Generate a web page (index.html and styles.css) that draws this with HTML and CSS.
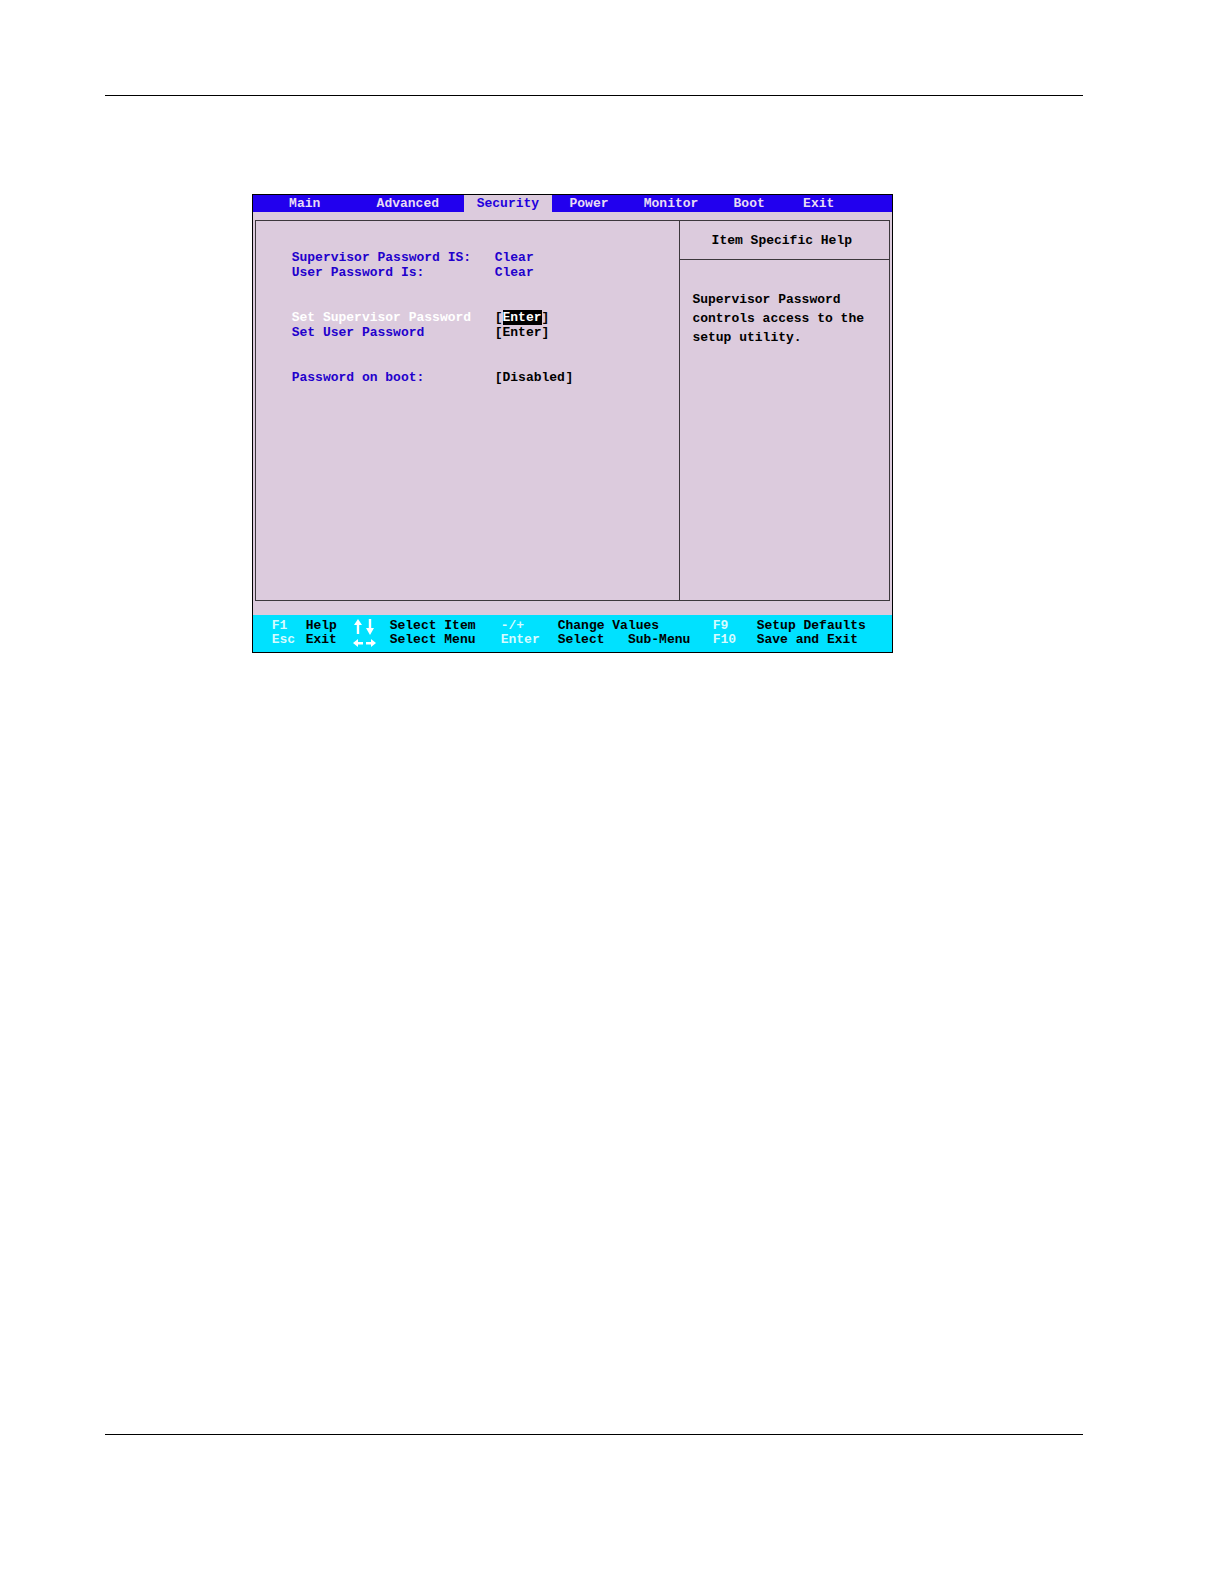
FILE: index.html
```html
<!doctype html>
<html lang="en">

<head>
  <meta charset="utf-8">
  <meta name="viewport" content="width=device-width, initial-scale=1">
  <title>Setup Utility - Security</title>
  <link rel="stylesheet" href="styles.css">
</head>

<body>
  <div class="page">
    <hr class="rule">

    <main class="bios">
      <nav class="tabs">
        <button class="tab">Main</button>
        <button class="tab">Advanced</button>
        <button class="tab active">Security</button>
        <button class="tab">Power</button>
        <button class="tab">Monitor</button>
        <button class="tab">Boot</button>
        <button class="tab">Exit</button>
      </nav>

      <div class="panel">
        <section class="settings">
          <div class="group">
            <div class="row"><span>Supervisor Password IS:</span><span>Clear</span></div>
            <div class="row"><span>User Password Is:</span><span>Clear</span></div>
          </div>
          <div class="group">
            <div class="row">
              <label class="selected" for="set-supervisor">Set Supervisor Password</label>
              <span class="value">[<button class="field highlight" id="set-supervisor">Enter</button>]</span>
            </div>
            <div class="row">
              <label for="set-user">Set User Password</label>
              <span class="value">[<button class="field" id="set-user">Enter</button>]</span>
            </div>
          </div>
          <div class="group">
            <div class="row">
              <label for="boot-password">Password on boot:</label>
              <span class="value">[<select class="field" id="boot-password"><option>Disabled</option><option>Enabled</option></select>]</span>
            </div>
          </div>
        </section>

        <aside class="help">
          <h1 class="help-title">Item Specific Help</h1>
          <p class="help-text">Supervisor Password controls access to the setup utility.</p>
        </aside>
      </div>

      <footer class="keys">
        <kbd>F1</kbd>
        <span>Help</span>
        <svg class="arrows" viewBox="0 0 24 28" aria-hidden="true">
          <!-- up / down -->
          <path d="M5 0l4 6H6.200v9H3.800V6H1zM15.800 0h2.400v9H21l-4 7-4-7h2.800z" />
          <!-- left / right -->
          <path d="M0 24l5-4v3h5v2.400H5V28zM23 24l-5-4v3h-5v2.400h5V28z" />
        </svg>
        <span>Select Item</span>
        <kbd>-/+</kbd>
        <span>Change Values</span>
        <kbd>F9</kbd>
        <span>Setup Defaults</span>

        <kbd>Esc</kbd>
        <span>Exit</span>
        <span>Select Menu</span>
        <kbd>Enter</kbd>
        <span>Select   Sub-Menu</span>
        <kbd>F10</kbd>
        <span>Save and Exit</span>
      </footer>
    </main>

    <hr class="rule bottom">
  </div>
</body>

</html>
```

FILE: styles.css
```css
* {
  box-sizing: border-box;
}

body {
  margin: 0;
  background-color: #fff;
}

.page {
  display: flex;
  flex-direction: column;
  min-height: 100vh;
  padding: 95px 141px 149px 105px;
}

.rule {
  width: 100%;
  height: 1px;
  margin: 0;
  border: none;
  background-color: #000;
}

.rule.bottom {
  margin-top: auto;
}

.bios {
  width: 65.6%;
  margin: 98px 0 98px 15%;
  border: 1px solid #000;
  background-color: #dccbdd;
  color: #000;
  font: bold 13px/15px "Liberation Mono", "Courier New", monospace;
}

/* menu bar */
.tabs {
  display: grid;
  grid-template-columns: 94fr 112fr 88fr 74fr 90fr 66fr 73fr;
  padding: 0 37px 0 5px;
  background-color: #2200ee;
}

.tab {
  height: 17px;
  padding: 0;
  border: none;
  background: none;
  color: #e8dcf4;
  font: inherit;
}

.tab.active {
  background-color: #dccbdd;
  color: #2200dd;
}

/* middle */
.panel {
  display: grid;
  grid-template-columns: 424fr 210fr;
  min-height: 381px;
  margin: 8px 2px 14px;
  border: 1px solid #3c373c;
}

.settings {
  display: flex;
  flex-direction: column;
  gap: 30px;
  padding: 29px 0 0 36px;
  color: #2200cc;
}

.row {
  display: grid;
  grid-template-columns: 203px 1fr;
}

.selected {
  color: #fff;
}

.value {
  display: flex;
  color: #000;
}

.field {
  height: 15px;
  padding: 0;
  border: none;
  background: none;
  color: inherit;
  font: inherit;
  appearance: none;
}

.highlight {
  background-color: #000;
  color: #fff;
}

.help {
  border-left: 1px solid #3c373c;
}

.help-title {
  margin: 0;
  padding: 12px 6px 11px 0;
  border-bottom: 1px solid #3c373c;
  font-size: 13px;
  line-height: 15px;
  text-align: center;
}

.help-text {
  margin: 0;
  padding: 30px 12px;
  line-height: 19px;
}

/* key legend */
.keys {
  display: grid;
  grid-template-columns: 34px 47px 37px 111px 57px 155px 44px 1fr;
  padding: 4px 0 5px 19px;
  background-color: #00e1ff;
  line-height: 14px;
  white-space: pre;
}

.keys kbd {
  color: #d4fbff;
  font: inherit;
}

.arrows {
  grid-row: 1 / 3;
  grid-column: 3;
  width: 24px;
  height: 28px;
  fill: #fff;
}
```
